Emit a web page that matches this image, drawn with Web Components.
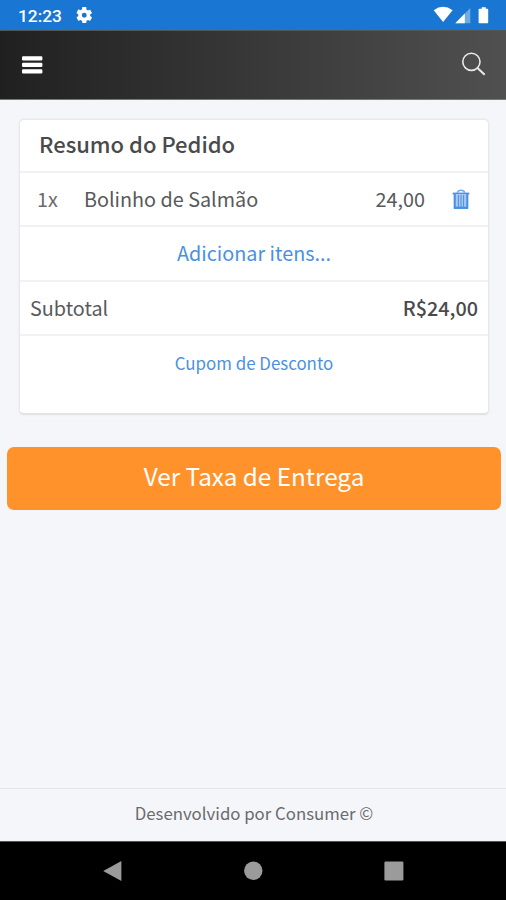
<!DOCTYPE html>
<html lang="pt-BR">
<head>
<meta charset="utf-8">
<title>Resumo do Pedido</title>
<style>
html,body{margin:0;height:100%;background:#f5f6fa}
body{font-family:"Noto Sans CJK SC","Noto Sans",sans-serif;color:#58595b;overflow:hidden}
</style>
</head>
<body>
<order-screen></order-screen>
<script>
const define = (name, html) => customElements.define(name, class extends HTMLElement {
  constructor() {
    super();
    this.attachShadow({ mode: 'open' }).innerHTML = html;
  }
});

define('status-bar', `<style>
:host{display:flex;align-items:center;height:30px;padding:0 14px 0 18px;box-sizing:border-box;background:#1976d2;color:#fff;font:500 17.3px/30px Roboto,sans-serif}
.time{width:44px;padding-top:1px;height:29px;white-space:nowrap}
.gear{margin-left:14px}
.signals{margin-left:auto}
svg{display:block}
</style>
<span class="time">12:23</span>
<svg class="gear" width="16.5" height="16.5" viewBox="2 2 20 20" fill="#fff"><path d="M19.14 12.94c.04-.3.06-.61.06-.94s-.02-.64-.07-.94l2.03-1.58a.5.5 0 0 0 .12-.61l-1.92-3.32a.5.5 0 0 0-.59-.22l-2.39.96a7 7 0 0 0-1.62-.94l-.36-2.54A.48.48 0 0 0 13.92 2h-3.84a.48.48 0 0 0-.47.41l-.36 2.54a7 7 0 0 0-1.62.94l-2.39-.96a.5.5 0 0 0-.59.22L2.74 8.87a.48.48 0 0 0 .12.61l2.03 1.58a7 7 0 0 0 0 1.88l-2.03 1.58a.5.5 0 0 0-.12.61l1.92 3.32c.12.22.37.29.59.22l2.39-.96c.5.38 1.03.7 1.62.94l.36 2.54c.05.24.24.41.48.41h3.84c.24 0 .44-.17.47-.41l.36-2.54a7 7 0 0 0 1.62-.94l2.39.96c.22.08.47 0 .59-.22l1.92-3.32a.48.48 0 0 0-.12-.61zM12 15a3 3 0 1 1 0-6 3 3 0 0 1 0 6z"/></svg>
<svg class="signals" width="59" height="18" viewBox="0 0 59 18" fill="#fff"><path d="M.7 4.2Q10-2.6 19.6 4.2L10.1 16Z"/><path d="M37.3 2v15.2H22.3Z" opacity=".38"/><path d="M31.8 7.6v9.6h-9.5Z"/><path d="M48.7 1.2h4.1v1.6h1.6q.8 0 .8.8v12.9q0 .8-.8.8h-8q-.8 0-.8-.8V3.6q0-.8.8-.8h2.3Z"/></svg>`);

define('app-header', `<style>
:host{display:flex;align-items:center;justify-content:space-between;height:70px;padding:0 20px 0 22px;box-sizing:border-box;background:linear-gradient(90deg,#202020,#505050);border-top:1px solid #555;border-bottom:1px solid #777}
svg{display:block}
</style>
<svg width="21" height="18" viewBox="0 0 21 18" fill="#fff"><rect y=".3" width="20.4" height="4.3" rx="1.1"/><rect y="6.8" width="20.4" height="4.3" rx="1.1"/><rect y="13.3" width="20.4" height="4.3" rx="1.1"/></svg>
<svg style="margin-top:-3px" width="25" height="24" viewBox="0 0 25 24" fill="none" stroke="#e9e9e9" stroke-width="1.6"><circle cx="10.4" cy="9.8" r="8.6"/><path d="m16.5 16 7.2 6.8" stroke-width="2"/></svg>`);

define('card-row', `<style>
:host{display:flex;box-sizing:border-box;height:54.3px;border-bottom:2px solid #f1f1f2;padding:0 10px;font-size:19.8px;line-height:51px;white-space:nowrap}
:host(:last-child){border:0}
</style><slot></slot>`);

define('order-card', `<style>
:host{display:block;margin:19px 17px 0 19px;height:296px;box-sizing:border-box;background:#fff;border:1px solid #e7e8ea;border-bottom:2px solid #e2e3e5;border-radius:5px;box-shadow:0 0 2px #e3e4e8}
.title{height:53px;padding-left:19px;font-size:22px;font-weight:500;line-height:47px;color:#4a4a4c}
.item{padding-left:17px;padding-right:18px}
.qty{width:47px;color:#6b6b6d}
.price{margin-left:auto;margin-right:27px}
svg{display:block;margin-top:16px}
.link{justify-content:center;color:#4a90e2}
.total{margin-left:auto;font-weight:500;color:#4a4a4c}
.coupon{height:78px;font-size:16.9px;line-height:53px}
</style>
<card-row class="title"><span>Resumo do Pedido</span></card-row>
<card-row class="item"><span class="qty">1x</span><span>Bolinho de Salmão</span><span class="price">24,00</span>
<svg width="18" height="21" viewBox="0 0 18 21" fill="none" stroke="#4a90e2"><path d="M5.3 3.6Q6 1.2 9 1.2t3.7 2.4" stroke="#78a9ef" stroke-width="1.6"/><path d="M.7 4.5h16.6" stroke-width="1.8"/><path d="M2.7 5v13.8h12.6V5" fill="#a9c8f4" stroke-width="2.1"/><path d="M6.4 6v12M9 6v12M11.6 6v12" stroke-width="1"/><path d="M2 18.9h14" stroke-width="2"/></svg></card-row>
<card-row class="link"><span>Adicionar itens...</span></card-row>
<card-row><span>Subtotal</span><span class="total">R$24,00</span></card-row>
<card-row class="link coupon"><span>Cupom de Desconto</span></card-row>`);

define('primary-button', `<style>
:host{display:block;margin:32px 5px 0 7px;height:63px;border-radius:7px;background:#ff922b;color:#fff;text-align:center;font-size:24.3px;line-height:58px}
</style><slot></slot>`);

define('page-footer', `<style>
:host{display:block;height:53px;box-sizing:border-box;padding-left:2px;border-top:1px solid #e3e5e9;text-align:center;font-size:16.8px;line-height:49px;color:#6b6b6d}
</style><slot></slot>`);

define('nav-bar', `<style>
:host{display:flex;height:59px;box-sizing:border-box;border-top:1px solid #555;background:#000;justify-content:center;align-items:center;gap:120.5px}
svg{display:block}
</style>
<svg width="20" height="22" viewBox="0 0 20 22" fill="#9b9b9b"><path d="M.2 11 18.4 1v20Z"/></svg>
<svg width="20" height="20" viewBox="0 0 20 20" fill="#9b9b9b"><circle cx="10.3" cy="9.8" r="9.2"/></svg>
<svg width="20" height="20" viewBox="0 0 20 20" fill="#9b9b9b"><rect x=".4" y=".5" width="19" height="19" rx="1.2"/></svg>`);

define('order-screen', `<style>
:host{display:flex;flex-direction:column;height:900px;width:506px}
page-footer{margin-top:auto}
</style>
<status-bar></status-bar><app-header></app-header><order-card></order-card>
<primary-button>Ver Taxa de Entrega</primary-button>
<page-footer>Desenvolvido por Consumer ©</page-footer><nav-bar></nav-bar>`);
</script>
</body>
</html>
